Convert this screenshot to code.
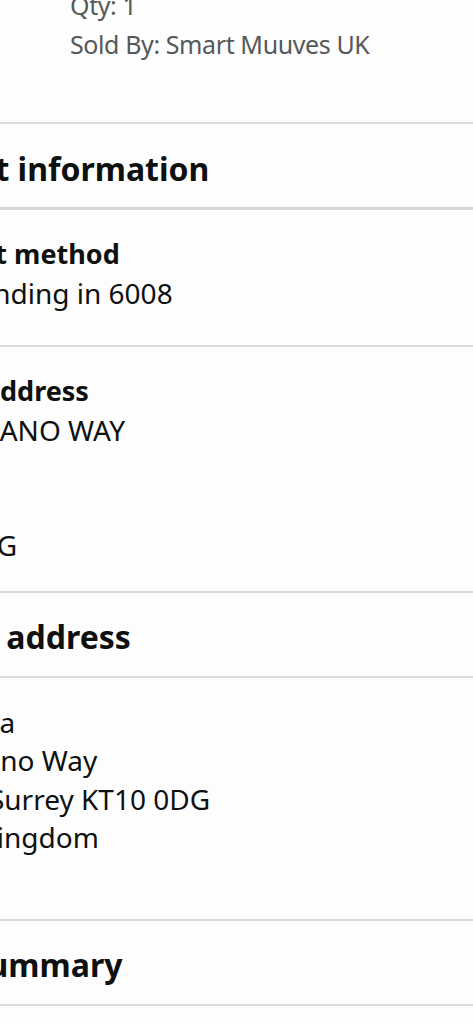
import React from "react";

const font = { fontFamily: '"Noto Sans", "Open Sans", sans-serif' };

export default function App() {
  return (
    <div
      className="w-[473px] h-[1024px] overflow-hidden bg-[#fdfdfd] text-[#0f1111]"
      style={font}
    >
      {/* Item details */}
      <div className="-mt-[14px] pl-[70px] pb-[59px] text-[25px] leading-[38.5px] tracking-[-0.4px] text-[#565959] whitespace-nowrap">
        <div>Qty: 1</div>
        <div>Sold By: Smart Muuves UK</div>
      </div>
      <div className="h-[2px] bg-[#dcdcdc]" />

      {/* Payment information heading */}
      <div className="-ml-[133px] pt-[23px] pb-[16px] text-[32px] leading-[44px] font-bold whitespace-nowrap">
        Payment information
      </div>
      <div className="h-[3px] bg-[#d6d6d6]" />

      {/* Payment method */}
      <div className="pt-[25px] pb-[33px] text-[28px] leading-[38.5px] whitespace-nowrap">
        <div className="-ml-[113px] text-[27px] font-bold">Payment method</div>
        <div className="-ml-[83px]">Visa ending in 6008</div>
      </div>
      <div className="h-[2px] bg-[#dcdcdc]" />

      {/* Billing address */}
      <div className="pt-[25px] pb-[26px] text-[28px] leading-[38.5px] whitespace-nowrap">
        <div className="-ml-[108px] text-[27px] font-bold">Billing address</div>
        <div className="-ml-[50px]">1 PIANO WAY</div>
        <div className="-ml-[140px]">ESHER</div>
        <div className="-ml-[140px]">SURREY</div>
        <div className="-ml-[112px]">KT10 0DG</div>
      </div>
      <div className="h-[2px] bg-[#dcdcdc]" />

      {/* Shipping address heading */}
      <div className="-ml-[141px] pt-[22px] pb-[17px] text-[32px] leading-[44px] font-bold whitespace-nowrap">
        Shipping address
      </div>
      <div className="h-[2px] bg-[#dcdcdc]" />

      {/* Shipping address */}
      <div className="pt-[25px] pb-[24px] text-[28px] leading-[38.5px] whitespace-nowrap">
        <div className="-ml-[53px]">Anna</div>
        <div className="-ml-[63px]">1 Piano Way</div>
        <div className="-ml-[95px]">Esher, Surrey KT10 0DG</div>
        <div className="-ml-[116px]">United Kingdom</div>
        <div className="-ml-[140px]">Phone</div>
      </div>
      <div className="h-[2px] bg-[#dcdcdc]" />

      {/* Order summary heading */}
      <div className="-ml-[131px] pt-[22px] pb-[17px] text-[32px] leading-[44px] font-bold whitespace-nowrap">
        Order Summary
      </div>
      <div className="h-[2px] bg-[#dcdcdc]" />
    </div>
  );
}
